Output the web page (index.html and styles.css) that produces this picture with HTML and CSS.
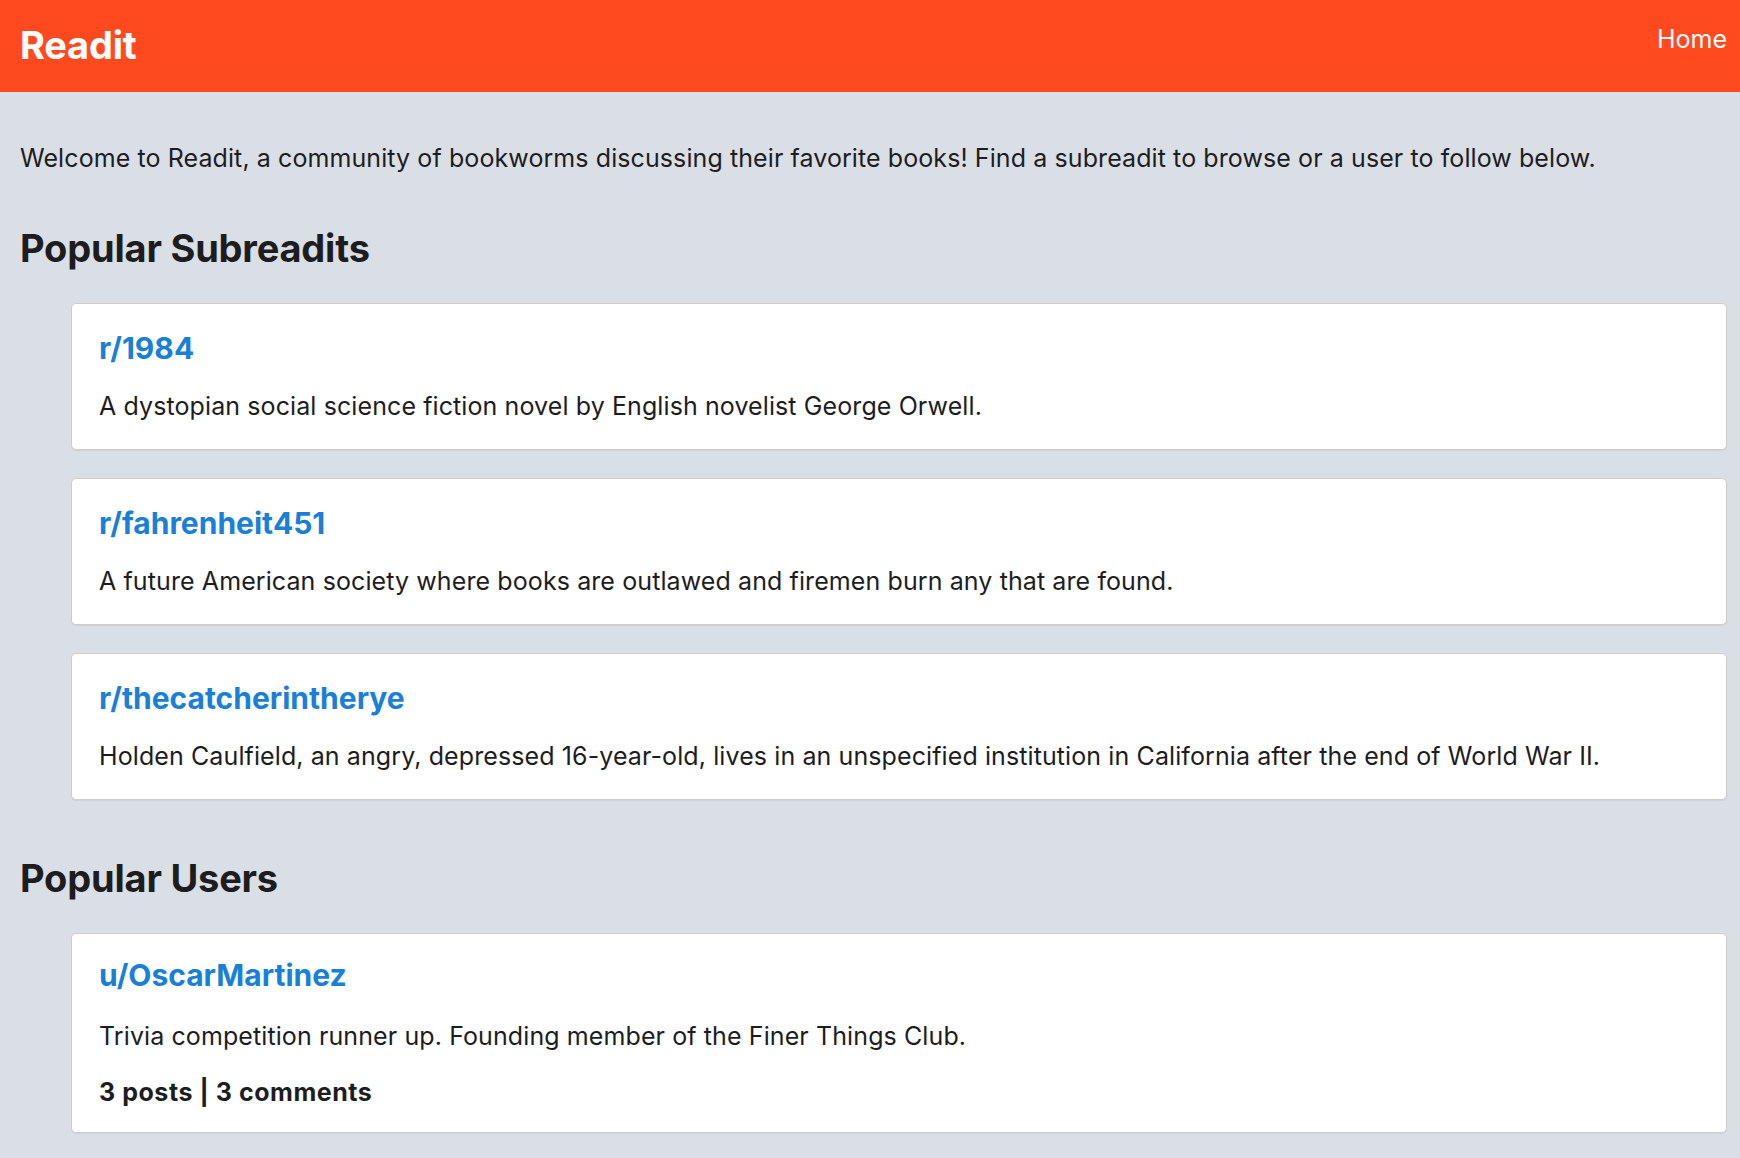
FILE: index.html
```html
<!DOCTYPE html>
<html lang="en">
<head>
<meta charset="utf-8">
<title>Readit</title>
<link rel="stylesheet" href="styles.css">
</head>
<body>
<header class="topbar">
  <a class="brand" href="#">Readit</a>
  <nav class="nav"><a class="nav-link" href="#">Home</a></nav>
</header>
<main class="content">
  <p class="welcome">Welcome to Readit, a community of bookworms discussing their favorite books! Find a subreadit to browse or a user to follow below.</p>
  <section class="section">
    <h2 class="section-title">Popular Subreadits</h2>
    <ul class="card-list">
      <li class="card">
        <a class="card-title" href="#">r/1984</a>
        <p class="card-text">A dystopian social science fiction novel by English novelist George Orwell.</p>
      </li>
      <li class="card">
        <a class="card-title" href="#">r/fahrenheit451</a>
        <p class="card-text">A future American society where books are outlawed and firemen burn any that are found.</p>
      </li>
      <li class="card">
        <a class="card-title" href="#">r/thecatcherintherye</a>
        <p class="card-text">Holden Caulfield, an angry, depressed 16-year-old, lives in an unspecified institution in California after the end of World War II.</p>
      </li>
    </ul>
  </section>
  <section class="section">
    <h2 class="section-title">Popular Users</h2>
    <ul class="card-list">
      <li class="card card-user">
        <a class="card-title" href="#">u/OscarMartinez</a>
        <p class="card-text">Trivia competition runner up. Founding member of the Finer Things Club.</p>
        <p class="card-stats">3 posts | 3 comments</p>
      </li>
    </ul>
  </section>
</main>
</body>
</html>
```

FILE: styles.css
```css
html, body {
  margin: 0;
  padding: 0;
}
body {
  background: #dadfe6;
  color: #1d1d1f;
  font-family: Inter, "Noto Sans", "Liberation Sans", sans-serif;
  font-size: 25px;
}
a {
  text-decoration: none;
}
.topbar {
  background: #ff4a1f;
  height: 92px;
  display: flex;
  justify-content: space-between;
  align-items: flex-start;
  padding: 0 13px 0 20px;
  box-sizing: border-box;
}
.brand {
  color: #ffffff;
  font-weight: 700;
  font-size: 38px;
  line-height: 46px;
  margin-top: 22px;
  letter-spacing: -0.2px;
}
.nav-link {
  color: #ffffff;
  font-size: 25px;
  line-height: 30px;
  display: block;
  margin-top: 24px;
}
.content {
  padding: 0 13px 0 20px;
}
.welcome {
  margin: 51px 0 52px;
  line-height: 30px;
  letter-spacing: 0.09px;
}
.section {
  margin-bottom: 55px;
}
.section-title {
  margin: 0;
  font-size: 38px;
  line-height: 46px;
  font-weight: 700;
  letter-spacing: -0.2px;
}
.card-list {
  list-style: none;
  margin: 32px 0 0;
  padding: 0 0 0 51px;
  display: flex;
  flex-direction: column;
  gap: 28px;
}
.card {
  background: #ffffff;
  border: 1px solid #cdcdcd;
  border-radius: 5px;
  box-shadow: 0 1px 1px rgba(0,0,0,0.06);
  padding: 26px 27px 28px;
}
.card-title {
  display: block;
  color: #1a7fd6;
  font-weight: 700;
  font-size: 30px;
  line-height: 36px;
}
.card-text {
  margin: 25px 0 0;
  line-height: 30px;
  letter-spacing: 0.1px;
}
.card-user {
  padding-top: 23px;
  padding-bottom: 25px;
}
.card-user .card-text {
  margin-top: 28px;
}
.card-stats {
  margin: 26px 0 0;
  line-height: 30px;
  font-weight: 700;
  letter-spacing: 0.55px;
}
```
